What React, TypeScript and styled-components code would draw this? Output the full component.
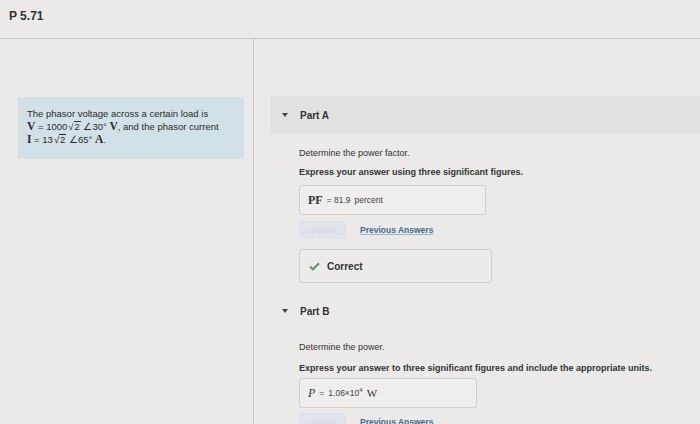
import React from 'react';
import styled, { createGlobalStyle } from 'styled-components';

const Global = createGlobalStyle`
  html, body {
    margin: 0;
    padding: 0;
    background: #ebeae8;
    font-family: "Liberation Sans", Arial, sans-serif;
    color: #2e2e2e;
    overflow: hidden;
  }
`;

const Page = styled.div`
  width: 700px;
  height: 424px;
  overflow: hidden;
`;

const Header = styled.div`
  height: 39px;
  border-bottom: 1px solid #c9c8c6;
  padding: 9px 0 0 9px;
  box-sizing: border-box;
  font-size: 12px;
  font-weight: bold;
  color: #333;
`;

const Body = styled.div`
  display: grid;
  grid-template-columns: 254px 1fr;
  height: 385px;
`;

const LeftCol = styled.div`
  border-right: 1px solid #c9c8c6;
  padding: 58px 0 0 18px;
`;

const InfoBox = styled.div`
  width: 226px;
  height: 62px;
  box-sizing: border-box;
  background: #d2e1e8;
  padding: 11px 8px 0 9px;
  font-size: 9.5px;
  line-height: 12px;
  color: #2a2a2a;
`;

const Math = styled.span`
  font-family: "Liberation Serif", "Times New Roman", serif;
  font-size: 11.5px;
  font-weight: bold;
`;

const Sqrt = styled.span`
  display: inline-block;
  line-height: 10px;
  margin-left: 1px;
`;

const Radicand = styled.span`
  display: inline-block;
  border-top: 1px solid #2a2a2a;
  line-height: 9px;
  padding: 0 1px;
`;

const RightCol = styled.div`
  padding: 57px 0 0 17px;
`;

const PartHeader = styled.div<{ $shaded?: boolean }>`
  height: 38px;
  display: flex;
  align-items: center;
  background: ${p => (p.$shaded ? '#e1e1e0' : 'transparent')};
  font-size: 10px;
  font-weight: bold;
  color: #333;
`;

const Caret = styled.span`
  width: 0;
  height: 0;
  border-left: 3px solid transparent;
  border-right: 3px solid transparent;
  border-top: 4px solid #444;
  margin: 0 12px 0 11px;
`;

const PartBody = styled.div`
  padding: 0 0 0 28px;
`;

const Prompt = styled.div<{ $strong?: boolean; $mt: number }>`
  margin-top: ${p => p.$mt}px;
  font-size: 9px;
  line-height: 11px;
  font-weight: ${p => (p.$strong ? 'bold' : 'normal')};
  color: #333;
  white-space: nowrap;
`;

const AnswerBox = styled.div<{ $w: number; $mt: number }>`
  width: ${p => p.$w}px;
  height: 30px;
  margin-top: ${p => p.$mt}px;
  box-sizing: border-box;
  border: 1px solid #cfcecb;
  border-radius: 3px;
  background: #efeeec;
  display: flex;
  align-items: center;
  padding-left: 8px;
  font-size: 8.5px;
  color: #444;
  gap: 4px;
`;

const Var = styled.span<{ $italic?: boolean }>`
  font-family: "Liberation Serif", "Times New Roman", serif;
  font-size: 12px;
  font-weight: ${p => (p.$italic ? 'normal' : 'bold')};
  font-style: ${p => (p.$italic ? 'italic' : 'normal')};
  color: #333;
`;

const Unit = styled.span`
  font-family: "Liberation Serif", "Times New Roman", serif;
  font-size: 11px;
  color: #333;
`;

const Exp = styled.sup`
  font-size: 6px;
  vertical-align: 4px;
  line-height: 0;
`;

const Actions = styled.div<{ $mt: number }>`
  display: flex;
  align-items: center;
  gap: 14px;
  margin-top: ${p => p.$mt}px;
`;

const SubmitBtn = styled.span`
  width: 47px;
  height: 18px;
  display: flex;
  align-items: center;
  justify-content: center;
  background: #dfe3ea;
  color: #cdd3dd;
  font-size: 8px;
  border-radius: 2px;
`;

const PrevLink = styled.span`
  font-size: 8.5px;
  font-weight: bold;
  color: #3f6b94;
  text-decoration: underline;
  text-decoration-color: #9cb5cc;
`;

const Feedback = styled.div`
  width: 193px;
  height: 34px;
  margin-top: 10px;
  box-sizing: border-box;
  border: 1px solid #cfcecb;
  border-radius: 3px;
  background: #ecebe9;
  display: flex;
  align-items: center;
  gap: 7px;
  padding-left: 9px;
  font-size: 10px;
  font-weight: bold;
  color: #333;
`;

const Check = () => (
  <svg width="11" height="9" viewBox="0 0 11 9">
    <path d="M1 4.6 L4 7.4 L10 1.2" fill="none" stroke="#5a8f6a" strokeWidth="2" />
  </svg>
);

const Spacer = styled.div<{ $h: number }>`
  height: ${p => p.$h}px;
`;

const Root = () => (
  <>
    √<Radicand>2</Radicand>
  </>
);

export default function App() {
  return (
    <Page>
      <Global />
      <Header>P 5.71</Header>
      <Body>
        <LeftCol>
          <InfoBox>
            The phasor voltage across a certain load is
            <br />
            <Math>V</Math> = 1000<Sqrt><Root /></Sqrt> ∠30° <Math>V</Math>, and the phasor current
            <br />
            <Math>I</Math> = 13<Sqrt><Root /></Sqrt> ∠65° <Math>A</Math>.
          </InfoBox>
        </LeftCol>
        <RightCol>
          <PartHeader $shaded>
            <Caret />
            Part A
          </PartHeader>
          <PartBody>
            <Prompt $mt={14}>Determine the power factor.</Prompt>
            <Prompt $mt={8} $strong>Express your answer using three significant figures.</Prompt>
            <AnswerBox $w={187} $mt={7}>
              <Var>PF</Var> = 81.9 <span>percent</span>
            </AnswerBox>
            <Actions $mt={6}>
              <SubmitBtn>Submit</SubmitBtn>
              <PrevLink>Previous Answers</PrevLink>
            </Actions>
            <Feedback>
              <Check />
              Correct
            </Feedback>
          </PartBody>
          <Spacer $h={9} />
          <PartHeader>
            <Caret />
            Part B
          </PartHeader>
          <PartBody>
            <Prompt $mt={12}>Determine the power.</Prompt>
            <Prompt $mt={10} $strong>
              Express your answer to three significant figures and include the appropriate units.
            </Prompt>
            <AnswerBox $w={178} $mt={4}>
              <Var $italic>P</Var> =
              <span>
                1.06×10<Exp>4</Exp>
              </span>
              <Unit>W</Unit>
            </AnswerBox>
            <Actions $mt={5}>
              <SubmitBtn>Submit</SubmitBtn>
              <PrevLink>Previous Answers</PrevLink>
            </Actions>
          </PartBody>
        </RightCol>
      </Body>
    </Page>
  );
}
